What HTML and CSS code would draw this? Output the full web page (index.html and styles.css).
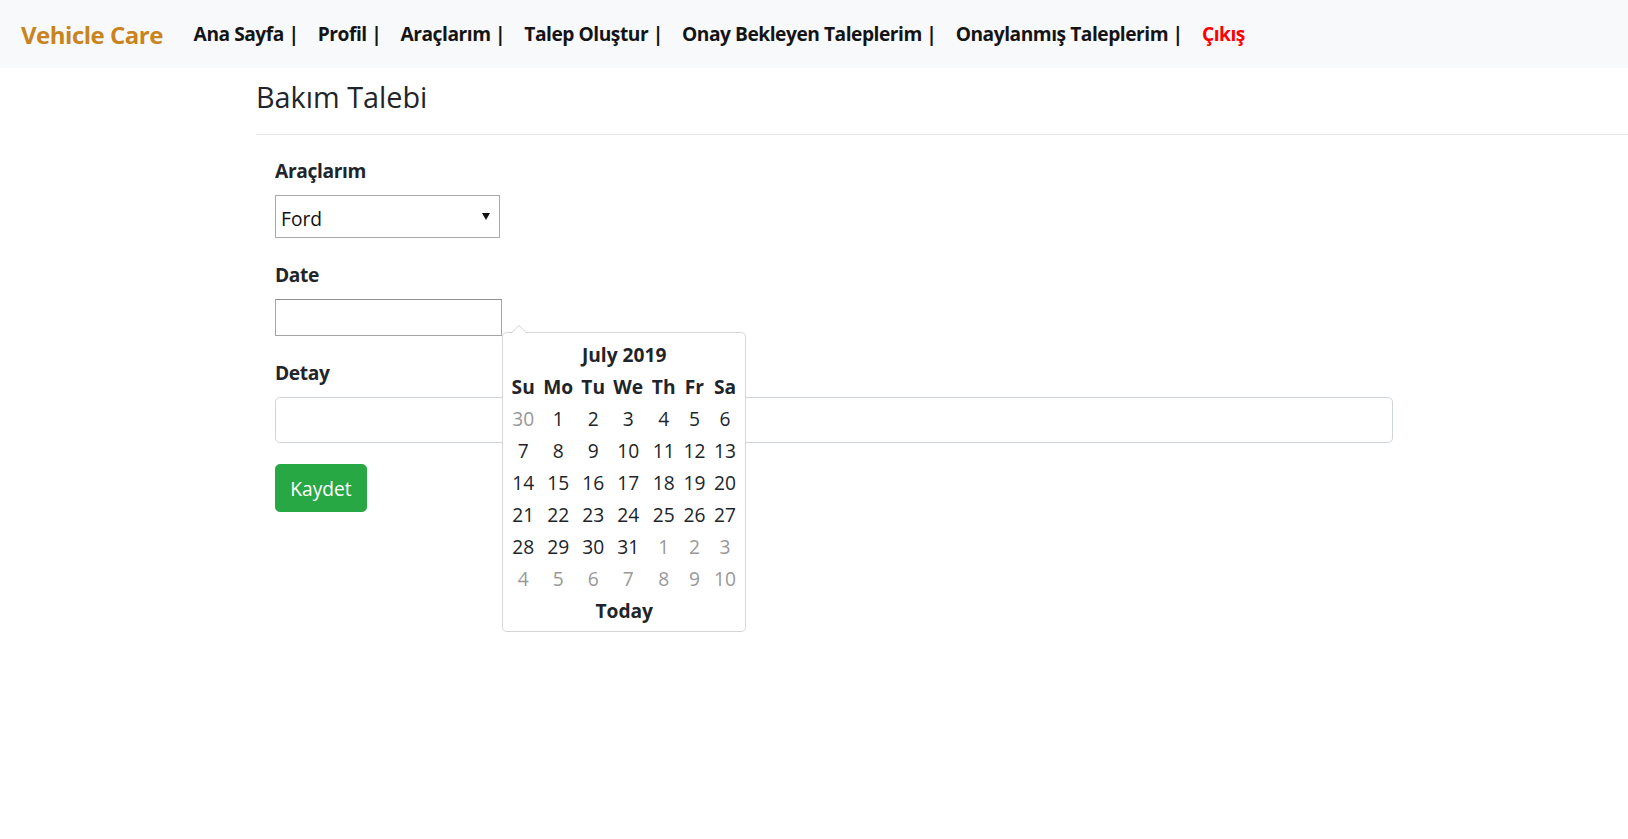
FILE: index.html
```html
<!DOCTYPE html>
<html lang="tr">
<head>
<meta charset="utf-8">
<title>Vehicle Care - Bakım Talebi</title>
<link rel="stylesheet" href="styles.css">
</head>
<body>
<nav class="navbar">
  <a class="brand" href="#">Vehicle Care</a>
  <ul class="nav-links">
    <li><a href="#">Ana Sayfa |</a></li>
    <li><a href="#">Profil |</a></li>
    <li><a href="#">Araçlarım |</a></li>
    <li><a href="#">Talep Oluştur |</a></li>
    <li><a href="#">Onay Bekleyen Taleplerim |</a></li>
    <li><a href="#">Onaylanmış Taleplerim |</a></li>
    <li><a class="logout" href="#">Çıkış</a></li>
  </ul>
</nav>
<main class="page">
  <h4 class="page-title">Bakım Talebi</h4>
  <hr class="divider">
  <form class="form">
    <div class="form-group">
      <label class="form-label" for="arac">Araçlarım</label>
      <div class="select-wrap">
        <select id="arac" class="select"><option>Ford</option></select>
      </div>
    </div>
    <div class="form-group date-group">
      <label class="form-label" for="date">Date</label>
      <input id="date" class="date-input" type="text">
      <div class="datepicker">
        <table class="dp-table">
          <colgroup>
            <col class="col-a"><col class="col-b"><col class="col-a"><col class="col-b"><col class="col-c"><col class="col-d"><col class="col-d">
          </colgroup>
          <thead>
            <tr><th colspan="7" class="dp-title">July 2019</th></tr>
            <tr class="dp-dow"><th>Su</th><th>Mo</th><th>Tu</th><th>We</th><th>Th</th><th>Fr</th><th>Sa</th></tr>
          </thead>
          <tbody>
            <tr><td class="muted">30</td><td>1</td><td>2</td><td>3</td><td>4</td><td>5</td><td>6</td></tr>
            <tr><td>7</td><td>8</td><td>9</td><td>10</td><td>11</td><td>12</td><td>13</td></tr>
            <tr><td>14</td><td>15</td><td>16</td><td>17</td><td>18</td><td>19</td><td>20</td></tr>
            <tr><td>21</td><td>22</td><td>23</td><td>24</td><td>25</td><td>26</td><td>27</td></tr>
            <tr><td>28</td><td>29</td><td>30</td><td>31</td><td class="muted">1</td><td class="muted">2</td><td class="muted">3</td></tr>
            <tr><td class="muted">4</td><td class="muted">5</td><td class="muted">6</td><td class="muted">7</td><td class="muted">8</td><td class="muted">9</td><td class="muted">10</td></tr>
          </tbody>
          <tfoot>
            <tr><th colspan="7" class="dp-today">Today</th></tr>
          </tfoot>
        </table>
      </div>
    </div>
    <div class="form-group last-group">
      <label class="form-label" for="detay">Detay</label>
      <input id="detay" class="form-control" type="text">
    </div>
    <button type="button" class="btn-save">Kaydet</button>
  </form>
</main>
</body>
</html>
```
FILE: styles.css
```css
* { box-sizing: border-box; }

html, body { min-height: 100%; }

body {
  margin: 0;
  font-family: "Open Sans", "Noto Sans", "Liberation Sans", sans-serif;
  font-size: 19.2px;
  line-height: 1.5;
  color: #212529;
  background: #fff;
}

/* Navbar */
.navbar {
  display: flex;
  align-items: center;
  height: 68px;
  padding: 0 21px;
  background: #f8f9fa;
}
.brand {
  font-size: 24px;
  line-height: 36px;
  font-weight: 700;
  letter-spacing: -0.5px;
  color: #c8841e;
  text-decoration: none;
  margin-right: 21.2px;
  padding-top: 2px;
}
.nav-links {
  display: flex;
  list-style: none;
  margin: 0;
  padding: 0;
}
.nav-links a {
  display: block;
  padding: 1px 9.6px 0;
  font-weight: 700;
  letter-spacing: -0.47px;
  line-height: 28.8px;
  color: #141414;
  text-decoration: none;
}
.nav-links a.logout { color: #ff0000; }

/* Page */
.page {
  min-height: calc(100vh - 68px);
  padding: 11.8px 0 0 256px;
}
.page-title {
  margin: 0;
  font-size: 28.8px;
  font-weight: 400;
  line-height: 1.2;
}
.divider {
  margin: 19.6px 0 0;
  border: 0;
  border-top: 1px solid #e6e6e6;
  height: 0;
}

/* Form */
.form {
  width: 1137px;
  padding: 21px 0 0 19px;
}
.form-group { margin-bottom: 21.6px; }
.form-group.last-group { margin-bottom: 20.7px; }
.date-group { position: relative; }

.form-label {
  display: block;
  font-weight: 700;
  letter-spacing: -0.35px;
  line-height: 28.8px;
  padding-top: 1.5px;
  margin-bottom: 8.8px;
}

.select-wrap {
  position: relative;
  width: 225px;
}
.select-wrap::after {
  content: "";
  position: absolute;
  right: 10px;
  top: 18px;
  border-left: 4px solid transparent;
  border-right: 4px solid transparent;
  border-top: 7px solid #111;
  pointer-events: none;
}
.select {
  display: block;
  width: 225px;
  height: 43px;
  padding: 5px 24px 0 5px;
  font: inherit;
  color: #111;
  background: #fff;
  border: 1px solid #a9a9a9;
  border-radius: 0;
  appearance: none;
  -webkit-appearance: none;
}

.date-input {
  display: block;
  width: 227px;
  height: 37.3px;
  font: inherit;
  border: 1px solid #a5a5a5;
  border-top-color: #8f8f8f;
  background: #fff;
  padding: 0 4px;
}

.form-control {
  display: block;
  width: 1118px;
  height: 46.5px;
  font: inherit;
  padding: 0 14px;
  border: 1px solid #ced4da;
  border-radius: 4.8px;
  background: #fff;
}

.btn-save {
  display: block;
  width: 92px;
  height: 48px;
  padding: 4px 0 0;
  font: inherit;
  line-height: 28.8px;
  color: #fff;
  background: #28a745;
  border: 1px solid #28a745;
  border-radius: 4.8px;
  cursor: pointer;
}

/* Datepicker dropdown */
.datepicker {
  position: absolute;
  left: 227.4px;
  top: 72.4px;
  z-index: 10;
  padding: 5.8px 4.8px 3.8px;
  background: #fff;
  border: 1px solid #d6d6d6;
  border-radius: 4.8px;
}
.datepicker::before {
  content: "";
  position: absolute;
  top: -8.4px;
  left: 7.2px;
  border-left: 8.4px solid transparent;
  border-right: 8.4px solid transparent;
  border-bottom: 8.4px solid #d0d0d0;
}
.datepicker::after {
  content: "";
  position: absolute;
  top: -7.2px;
  left: 8.4px;
  border-left: 7.2px solid transparent;
  border-right: 7.2px solid transparent;
  border-bottom: 7.2px solid #fff;
}
.dp-table {
  width: 232px;
  table-layout: fixed;
  border-collapse: collapse;
  border-spacing: 0;
}
.col-a { width: 30px; }
.col-b { width: 40px; }
.col-c { width: 31px; }
.col-d { width: 30.5px; }
.dp-table th,
.dp-table td {
  padding: 0;
  height: 32px;
  line-height: 32px;
  text-align: center;
  white-space: nowrap;
}
.dp-table th { font-weight: 700; }
.dp-table td { font-weight: 400; }
.dp-table td.muted { color: #999; }
```
